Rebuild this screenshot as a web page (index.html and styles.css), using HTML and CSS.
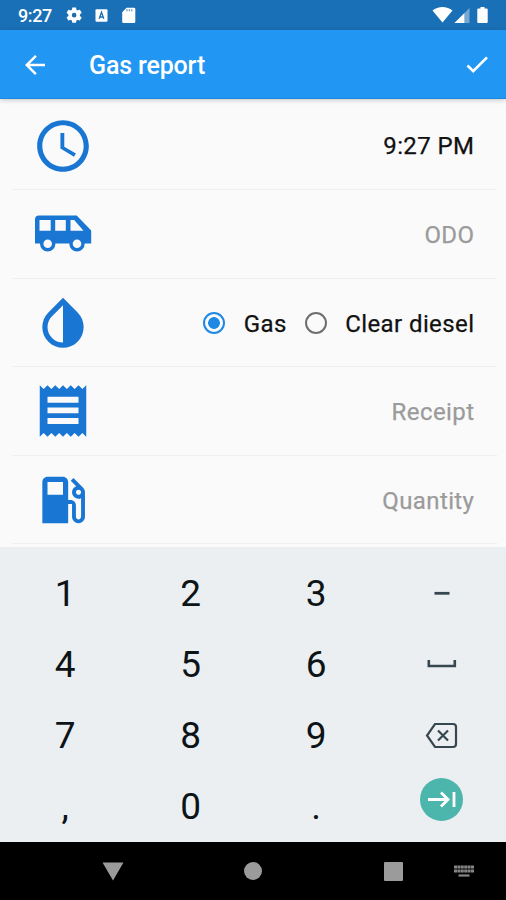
FILE: index.html
```html
<!DOCTYPE html>
<html lang="en">
<head>
<meta charset="utf-8">
<title>Gas report</title>
<link rel="stylesheet" href="styles.css">
</head>
<body>
<div class="screen">
  <header class="status">
    <span class="status-time">9:27</span>
    <svg class="status-left" viewBox="0 0 72 20">
      <path transform="translate(-1.1 .9) scale(.77)" fill-rule="evenodd" d="M19.43 12.98c.04-.32.07-.64.07-.98s-.03-.66-.07-.98l2.11-1.65c.19-.15.24-.42.12-.64l-2-3.46c-.12-.22-.39-.3-.61-.22l-2.49 1c-.52-.4-1.08-.73-1.69-.98l-.38-2.65C14.46 2.18 14.25 2 14 2h-4c-.25 0-.46.18-.49.42l-.38 2.65c-.61.25-1.17.59-1.69.98l-2.49-1c-.23-.09-.49 0-.61.22l-2 3.46c-.13.22-.07.49.12.64l2.11 1.65c-.04.32-.07.65-.07.98s.03.66.07.98l-2.11 1.65c-.19.15-.24.42-.12.64l2 3.46c.12.22.39.3.61.22l2.49-1c.52.4 1.08.73 1.69.98l.38 2.65c.03.24.24.42.49.42h4c.25 0 .46-.18.49-.42l.38-2.65c.61-.25 1.17-.59 1.69-.98l2.49 1c.23.09.49 0 .61-.22l2-3.46c.12-.22.07-.49-.12-.64zM12 15a3 3 0 1 1 0-6 3 3 0 0 1 0 6z"/>
      <rect x="29.500" y="4.300" width="12" height="12.500" rx="1"/>
      <path class="status-cut" d="M33.200 13.800 35.500 7.300l2.300 6.500M34.200 12h2.600"/>
      <path d="M60.500 2.800H68a1.300 1.300 0 0 1 1.300 1.300v12.600a1.300 1.300 0 0 1-1.300 1.300H57.500a1.300 1.300 0 0 1-1.300-1.300V7.300z"/>
      <path class="status-cut" opacity=".7" d="M61 4.300v2M63.400 4.300v2M65.800 4.300v2"/>
    </svg>
    <svg class="status-right" viewBox="0 0 60 20">
      <path d="M.5 5.500C6 .8 15 .8 20.500 5.500L10.500 17.500z"/>
      <path opacity=".4" d="M37.500 3v15H22.500z"/>
      <path d="M32.300 8.200V18H22.500z"/>
      <path d="M48.500 2h4v1.500h2.200a1 1 0 0 1 1 1V17a1 1 0 0 1-1 1h-8.400a1 1 0 0 1-1-1V4.500a1 1 0 0 1 1-1h2.200z"/>
    </svg>
  </header>
  <div class="appbar">
    <svg class="back" viewBox="4 4 16 16"><path d="M20 11H7.830l5.590-5.590L12 4l-8 8 8 8 1.410-1.410L7.830 13H20z"/></svg>
    <h1 class="title">Gas report</h1>
    <svg class="check" viewBox="0 0 24 18"><path d="M2.500 9.500 8.200 15.200 22 1.400"/></svg>
  </div>
  <main class="list">
    <div class="row">
      <svg class="icon" viewBox="0 0 24 24"><path d="M11.990 2C6.470 2 2 6.480 2 12s4.470 10 9.990 10C17.520 22 22 17.520 22 12S17.520 2 11.990 2zM12 20c-4.420 0-8-3.580-8-8s3.580-8 8-8 8 3.580 8 8-3.580 8-8 8zm.5-13H11v6l5.250 3.150.75-1.230-4.500-2.670z"/></svg>
      <span class="value time">9:27 PM</span>
    </div>
    <div class="row">
      <svg class="icon" viewBox="0 0 62 62">
        <path fill-rule="evenodd" d="M7 12.500H44.700L59.200 27.500V40.500H3V16.500a4 4 0 0 1 4-4zM7.500 17.100V27.800H18.700V17.100zM23.200 17.100V27.800H33.800V17.100zM38.500 17.100V27.800H51.500L42.200 17.100z"/>
        <circle class="wheel" cx="15.700" cy="40.800" r="6"/><circle class="wheel" cx="45" cy="40.800" r="6"/>
      </svg>
      <span class="value hint odo">ODO</span>
    </div>
    <div class="row">
      <svg class="icon" viewBox="0 0 24 24"><path d="M17.660 7.930L12 2.270 6.340 7.930c-3.120 3.120-3.120 8.190 0 11.310C7.900 20.800 9.950 21.580 12 21.580s4.100-.78 5.660-2.340c3.120-3.120 3.120-8.190 0-11.310zM12 19.590c-1.600 0-3.110-.62-4.240-1.760C6.620 16.690 6 15.190 6 13.590s.62-3.110 1.760-4.240L12 5.100v14.490z"/></svg>
      <span class="radio on"></span><span class="value gas">Gas</span>
      <span class="radio"></span><span class="value diesel">Clear diesel</span>
    </div>
    <div class="row">
      <svg class="icon" viewBox="0 0 24 24"><path d="M18 17H6v-2.300h12zm0-4.100H6v-2.300h12zm0-4.100H6V6.500h12zM3 22l1.500-1.500L6 22l1.500-1.500L9 22l1.500-1.500L12 22l1.500-1.500L15 22l1.500-1.500L18 22l1.500-1.500L21 22V2l-1.500 1.500L18 2l-1.500 1.500L15 2l-1.500 1.500L12 2l-1.500 1.500L9 2 7.500 3.500 6 2 4.500 3.500 3 2v20z"/></svg>
      <span class="value hint receipt">Receipt</span>
    </div>
    <div class="row">
      <svg class="icon" viewBox="0 0 24 24"><path d="M19.770 7.230l.01-.01-3.720-3.720L15 4.560l2.110 2.110c-.94.36-1.610 1.260-1.610 2.330 0 1.380 1.120 2.500 2.500 2.500.36 0 .69-.08 1-.21v7.210c0 .55-.45 1-1 1s-1-.45-1-1V14c0-1.100-.9-2-2-2h-1V5c0-1.100-.9-2-2-2H6c-1.100 0-2 .9-2 2v16h10v-7.500h1.500v5c0 1.380 1.120 2.500 2.500 2.500s2.500-1.120 2.500-2.500V9c0-.69-.28-1.320-.73-1.770zM12 10H6V5h6v5zm6 0c-.55 0-1-.45-1-1s.45-1 1-1 1 .45 1 1-.45 1-1 1z"/></svg>
      <span class="value hint quantity">Quantity</span>
    </div>
  </main>
  <div class="keyboard">
    <span class="key">1</span><span class="key">2</span><span class="key">3</span>
    <span class="key"><svg class="glyph" viewBox="0 0 44 44"><path d="M14.500 21.300H29.500" stroke-width="2.800"/></svg></span>
    <span class="key">4</span><span class="key">5</span><span class="key">6</span>
    <span class="key"><svg class="glyph" viewBox="0 0 44 44"><path d="M8.800 17V23H34.800V17" stroke-width="2.600"/></svg></span>
    <span class="key">7</span><span class="key">8</span><span class="key">9</span>
    <span class="key"><svg class="glyph" viewBox="0 0 44 44"><path d="M15 10H33Q36 10 36 13V30Q36 33 33 33H15L7 21.500zM18 16.500 28 26.500M28 16.500 18 26.500" stroke-width="2.200"/></svg></span>
    <span class="key">,</span><span class="key">0</span><span class="key">.</span>
    <span class="key"><svg class="glyph next" viewBox="0 0 44 44"><circle cx="21.500" cy="21.500" r="21.500"/><path d="M8 21.500H28M21 14.500 28 21.500 21 28.500M34 14V29"/></svg></span>
  </div>
  <nav class="nav">
    <svg class="nav-back" viewBox="0 0 22 19"><path d="M.5.5h21L11 18.500z"/></svg>
    <span class="nav-home"></span>
    <span class="nav-recent"></span>
    <svg class="nav-keys" viewBox="0 0 20 12"><path d="M0 2H20M0 6H20" stroke-width="3" stroke-dasharray="3 .400"/><path d="M4.500 10.500H15.500" stroke-width="2.200"/></svg>
  </nav>
</div>
</body>
</html>
```
FILE: styles.css
```css
* { box-sizing: border-box; }
body { margin: 0; font-family: Roboto, "Liberation Sans", sans-serif; }
svg { display: block; flex: none; }
.screen { width: 506px; height: 900px; overflow: hidden; display: flex; flex-direction: column; background: #fafafa; }

.status { height: 30px; flex: none; display: flex; align-items: center; background: #1a70b7; color: #fff; padding: 0 14px 0 18px; }
.status-time { width: 48px; font-size: 18px; font-weight: 500; line-height: 30px; padding-top: 2px; letter-spacing: -.4px; }
.status svg { height: 20px; fill: #fff; }
.status-left { width: 72px; }
.status-right { width: 60px; margin-left: auto; }
.status .status-cut { fill: none; stroke: #1a70b7; stroke-width: 1.3; }

.appbar { height: 69px; flex: none; display: flex; align-items: center; padding: 0 17px 0 25px; background: #2196f3; border-bottom: 1px solid #1b87e0; box-shadow: 0 1px 5px rgba(0, 0, 0, .22); z-index: 1; }
.back { width: 20px; height: 20px; margin-top: 1px; fill: #fff; }
.title { margin: 4px 0 0 44px; color: #fff; font-size: 25px; font-weight: 500; line-height: 34px; letter-spacing: -.15px; }
.check { width: 24px; height: 18px; margin: 2px 0 0 auto; fill: none; stroke: #fff; stroke-width: 2.7; }

.list { flex: none; height: 448px; padding: 2.400px 9px 0 12px; }
.row { height: 88.600px; display: flex; align-items: center; padding: 1px 23px 0 20px; border-bottom: 1px solid #eeeff0; }
.icon { width: 62px; height: 62px; margin-right: auto; fill: #1976d2; }
.wheel { fill: #fafafa; stroke: #1976d2; stroke-width: 3.400; }
.value { margin-right: -.400px; padding-top: 1.500px; font-size: 24px; font-weight: 400; line-height: 30px; letter-spacing: .400px; color: #111; -webkit-text-stroke: .25px; white-space: nowrap; }
.hint { color: #9b9b9b; }
.radio { width: 22px; height: 22px; border: 2px solid #6e6e6e; border-radius: 50%; }
.radio.on { border-color: #1e88e5; background: radial-gradient(circle, #1e88e5 5.500px, transparent 6.200px); }
.gas { margin: 0 18px 0 19px; }
.diesel { margin-left: 18.500px; }

.keyboard { flex: none; height: 295px; padding: 11px 1px 0 2.500px; display: grid; grid-template-columns: repeat(4, 125.500px); grid-template-rows: repeat(4, 71.200px); background: #eceff1; }
.key { display: flex; align-items: center; justify-content: center; font-size: 37px; line-height: 44px; color: #0d1418; }
.glyph { width: 44px; height: 44px; fill: none; stroke: #37474f; }
.next { margin-bottom: 15px; stroke: #fff; stroke-width: 2.800; }
.next circle { fill: #4db6ac; stroke: none; }

.nav { flex: 1; display: flex; align-items: center; padding: 0 32px 0 102px; background: #000; }
.nav-back { width: 22px; height: 19px; fill: #9b9b9b; }
.nav-home { width: 18px; height: 18px; margin-left: 120px; border-radius: 50%; background: #9b9b9b; }
.nav-recent { width: 19px; height: 19px; margin-left: 122px; border-radius: 1px; background: #9b9b9b; }
.nav-keys { width: 20px; height: 12px; margin-left: auto; fill: none; stroke: #858585; }
```
